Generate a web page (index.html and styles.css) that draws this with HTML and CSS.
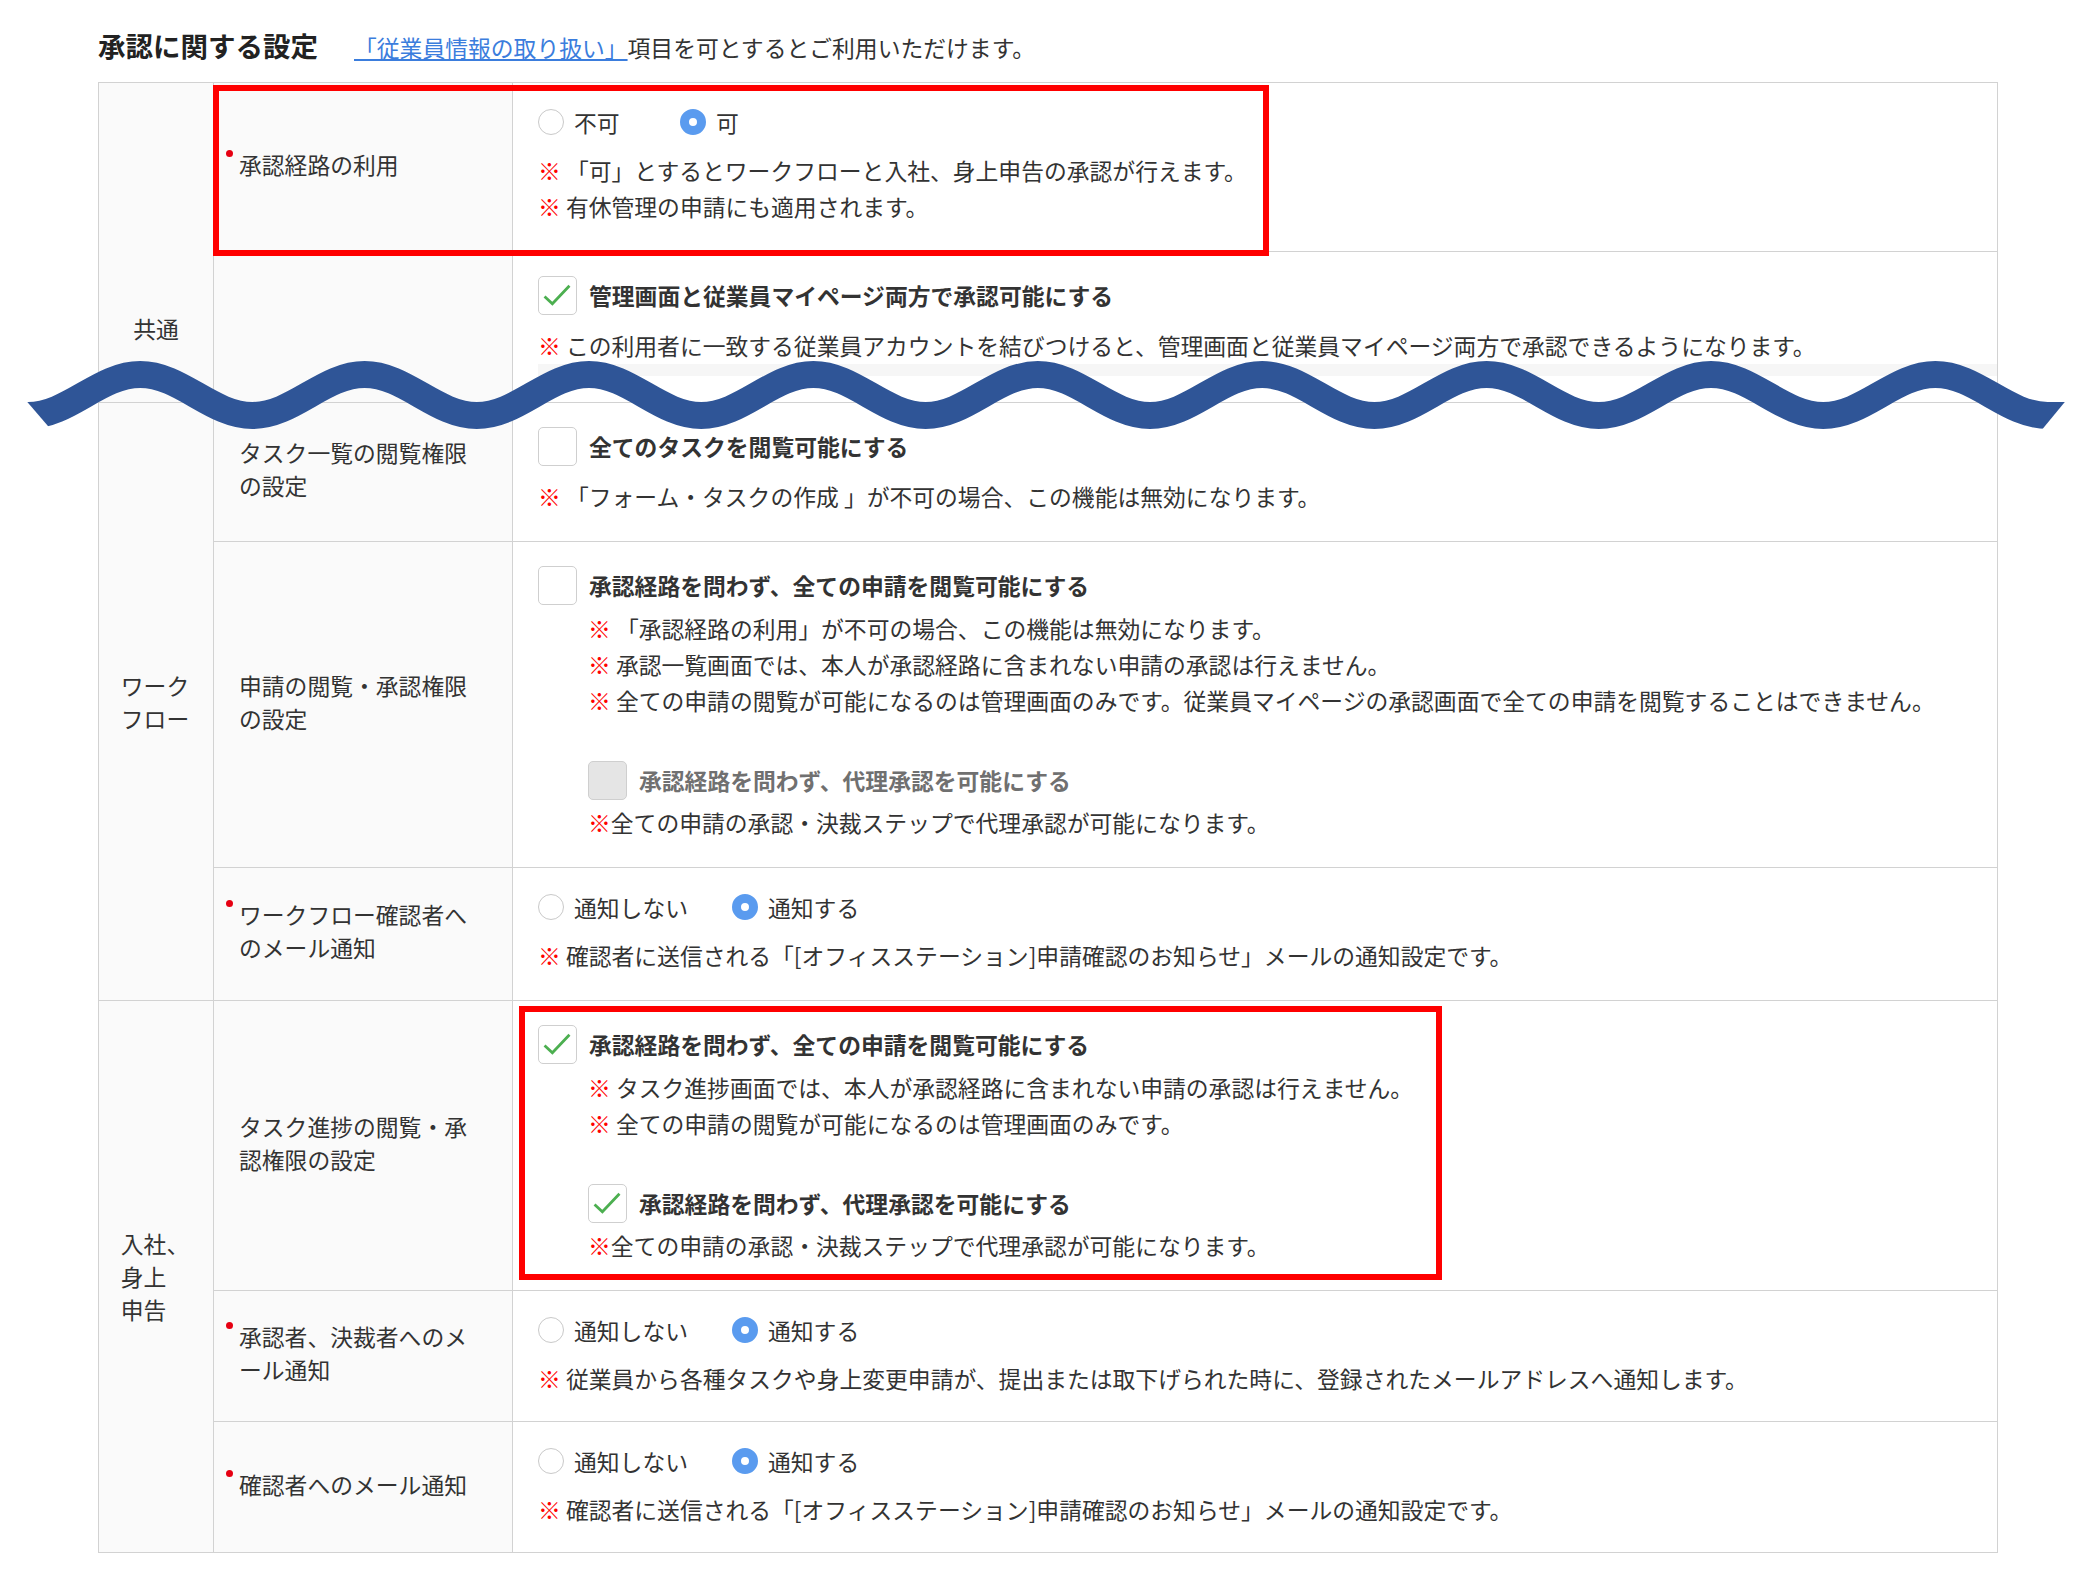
FILE: index.html
```html
<!DOCTYPE html>
<html lang="ja">
<head>
  <meta charset="UTF-8">
  <title>承認に関する設定</title>
  <link rel="stylesheet" href="styles.css">
</head>
<body>

<div class="page">

  <!-- heading -->
  <div class="heading">
    <h2>承認に関する設定</h2>
    <a href="#" class="heading-link">「従業員情報の取り扱い」</a>
    <span>項目を可とするとご利用いただけます。</span>
  </div>

  <div class="table-wrap">
    <table class="settings">
      <colgroup>
        <col class="col-cat">
        <col class="col-label">
        <col>
      </colgroup>

      <!-- 共通 -->
      <tr>
        <th class="cat cat-common" rowspan="2">共通</th>
        <th class="label"><span class="label-text required">承認経路の利用</span></th>
        <td class="body">
          <div class="choices">
            <label class="choice"><span class="radio"></span><span class="choice-text">不可</span></label>
            <label class="choice"><span class="radio on"></span><span class="choice-text">可</span></label>
          </div>
          <p class="note"><span class="mark">※</span> 「可」とするとワークフローと入社、身上申告の承認が行えます。</p>
          <p class="note"><span class="mark">※</span> 有休管理の申請にも適用されます。</p>
        </td>
      </tr>
      <tr>
        <th class="label"></th>
        <td class="body">
          <div class="check">
            <span class="box checked"><svg viewBox="0 0 39 39"><path d="M6 21 L14.5 29 L33 9.5"/></svg></span>
            <span>管理画面と従業員マイページ両方で承認可能にする</span>
          </div>
          <p class="note"><span class="mark">※</span> この利用者に一致する従業員アカウントを結びつけると、管理画面と従業員マイページ両方で承認できるようになります。</p>
          <div class="cut-panel"></div>
        </td>
      </tr>

      <!-- ワークフロー -->
      <tr>
        <th class="cat" rowspan="3"><span class="cat-text">ワーク<br>フロー</span></th>
        <th class="label"><span class="label-text">タスク一覧の閲覧権限の設定</span></th>
        <td class="body">
          <div class="check">
            <span class="box"></span>
            <span>全てのタスクを閲覧可能にする</span>
          </div>
          <p class="note"><span class="mark">※</span> 「フォーム・タスクの作成 」が不可の場合、この機能は無効になります。</p>
        </td>
      </tr>
      <tr>
        <th class="label"><span class="label-text">申請の閲覧・承認権限の設定</span></th>
        <td class="body">
          <div class="check check-tight">
            <span class="box"></span>
            <span>承認経路を問わず、全ての申請を閲覧可能にする</span>
          </div>
          <div class="indent">
            <p class="note"><span class="mark">※</span> 「承認経路の利用」が不可の場合、この機能は無効になります。</p>
            <p class="note"><span class="mark">※</span> 承認一覧画面では、本人が承認経路に含まれない申請の承認は行えません。</p>
            <p class="note"><span class="mark">※</span> 全ての申請の閲覧が可能になるのは管理画面のみです。従業員マイページの承認画面で全ての申請を閲覧することはできません。</p>
            <div class="check check-sub disabled">
              <span class="box"></span>
              <span>承認経路を問わず、代理承認を可能にする</span>
            </div>
            <p class="note"><span class="mark">※</span>全ての申請の承認・決裁ステップで代理承認が可能になります。</p>
          </div>
        </td>
      </tr>
      <tr>
        <th class="label"><span class="label-text required">ワークフロー確認者へのメール通知</span></th>
        <td class="body">
          <div class="choices">
            <label class="choice"><span class="radio"></span><span class="choice-text">通知しない</span></label>
            <label class="choice"><span class="radio on"></span><span class="choice-text">通知する</span></label>
          </div>
          <p class="note"><span class="mark">※</span> 確認者に送信される「[オフィスステーション]申請確認のお知らせ」メールの通知設定です。</p>
        </td>
      </tr>

      <!-- 入社、身上申告 -->
      <tr>
        <th class="cat" rowspan="3"><span class="cat-text">入社、<br>身上<br>申告</span></th>
        <th class="label"><span class="label-text">タスク進捗の閲覧・承認権限の設定</span></th>
        <td class="body">
          <div class="check check-tight">
            <span class="box checked"><svg viewBox="0 0 39 39"><path d="M6 21 L14.5 29 L33 9.5"/></svg></span>
            <span>承認経路を問わず、全ての申請を閲覧可能にする</span>
          </div>
          <div class="indent">
            <p class="note"><span class="mark">※</span> タスク進捗画面では、本人が承認経路に含まれない申請の承認は行えません。</p>
            <p class="note"><span class="mark">※</span> 全ての申請の閲覧が可能になるのは管理画面のみです。</p>
            <div class="check check-sub">
              <span class="box checked"><svg viewBox="0 0 39 39"><path d="M6 21 L14.5 29 L33 9.5"/></svg></span>
              <span>承認経路を問わず、代理承認を可能にする</span>
            </div>
            <p class="note"><span class="mark">※</span>全ての申請の承認・決裁ステップで代理承認が可能になります。</p>
          </div>
        </td>
      </tr>
      <tr>
        <th class="label"><span class="label-text required">承認者、決裁者へのメール通知</span></th>
        <td class="body body-short">
          <div class="choices">
            <label class="choice"><span class="radio"></span><span class="choice-text">通知しない</span></label>
            <label class="choice"><span class="radio on"></span><span class="choice-text">通知する</span></label>
          </div>
          <p class="note"><span class="mark">※</span> 従業員から各種タスクや身上変更申請が、提出または取下げられた時に、登録されたメールアドレスへ通知します。</p>
        </td>
      </tr>
      <tr>
        <th class="label"><span class="label-text required">確認者へのメール通知</span></th>
        <td class="body body-short">
          <div class="choices">
            <label class="choice"><span class="radio"></span><span class="choice-text">通知しない</span></label>
            <label class="choice"><span class="radio on"></span><span class="choice-text">通知する</span></label>
          </div>
          <p class="note"><span class="mark">※</span> 確認者に送信される「[オフィスステーション]申請確認のお知らせ」メールの通知設定です。</p>
        </td>
      </tr>
    </table>

    <!-- red annotation frames -->
    <div class="frame frame-top"></div>
    <div class="frame frame-bottom"></div>
  </div>

  <!-- cut mark between the two parts of the screenshot -->
  <svg class="wave" viewBox="0 0 2078 110" width="2078" height="110">
    <defs>
      <clipPath id="waveCut">
        <polygon points="-26,0 2116,0 2025.3,110 68.6,110"/>
      </clipPath>
    </defs>
    <path clip-path="url(#waveCut)"
          d="M0 75.5 L28 75.5 C68.8 75.5 99.4 34.5 140.2 34.5
             S211.6 75.5 252.4 75.5 S323.8 34.5 364.6 34.5
             S436 75.5 476.8 75.5 S548.2 34.5 589 34.5
             S660.4 75.5 701.2 75.5 S772.6 34.5 813.4 34.5
             S884.8 75.5 925.6 75.5 S997 34.5 1037.8 34.5
             S1109.2 75.5 1150 75.5 S1221.4 34.5 1262.2 34.5
             S1333.6 75.5 1374.4 75.5 S1445.8 34.5 1486.6 34.5
             S1558 75.5 1598.8 75.5 S1670.2 34.5 1711 34.5
             S1782.4 75.5 1823.2 75.5 S1894.6 34.5 1935.4 34.5
             S2006.8 75.5 2047.6 75.5 L2078 75.5"/>
  </svg>

</div>

</body>
</html>
```

FILE: styles.css
```css
body {
  margin: 0;
  font-family: "Noto Sans CJK JP", "Noto Sans", sans-serif;
  font-size: 22.8px;
  color: #333;
  background-color: #fff;
}

.page {
  position: relative;
  padding: 26px 0 40px 98px;
}

/* heading */
.heading {
  display: flex;
  align-items: baseline;
  height: 38px;
  margin-bottom: 18px;
}

.heading h2 {
  margin: 0 36px 0 0;
  font-size: 27.5px;
  line-height: 38px;
  font-weight: 700;
  color: #222;
}

.heading-link {
  color: #3b7ddd;
  text-decoration: underline;
}

/* table */
.table-wrap {
  position: relative;
  width: 1900px;
}

.settings {
  width: 1900px;
  border-collapse: collapse;
  table-layout: fixed;
}

.col-cat {
  width: 115px;
}

.col-label {
  width: 299px;
}

.settings th,
.settings td {
  border: 1px solid #d2d2d2;
}

.cat {
  background-color: #fafafa;
  font-weight: normal;
  text-align: center;
  vertical-align: middle;
  line-height: 33px;
  padding: 0 2px 0 0;
}

.cat-text {
  display: inline-block;
  text-align: left;
}

.cat-common {
  vertical-align: bottom;
  padding: 0 0 57px 0;
}

.label {
  background-color: #fafafa;
  font-weight: normal;
  text-align: left;
  vertical-align: middle;
  line-height: 33px;
  padding: 0 37px 6px 25px;
  line-break: loose;
}

.label-text {
  position: relative;
}

.required::before {
  content: "";
  position: absolute;
  left: -13px;
  top: 2px;
  width: 7px;
  height: 7px;
  border-radius: 50%;
  background-color: #e60012;
}

.body {
  vertical-align: top;
  padding: 24px 25px 26px;
  background-color: #fff;
}

.body-short {
  padding-bottom: 24px;
}

/* radios */
.choices {
  display: flex;
  align-items: center;
  height: 30px;
  margin-bottom: 16px;
}

.choice {
  display: flex;
  align-items: center;
  margin-right: 44px;
}

.choice-text {
  min-width: 62px;
}

.radio {
  width: 26px;
  height: 26px;
  box-sizing: border-box;
  border: 1.5px solid #c9c9c9;
  border-radius: 50%;
  background-color: #fff;
  margin-right: 10px;
}

.radio.on {
  border: 9px solid #5a9bef;
  background-color: #fff;
}

/* checkboxes */
.check {
  display: flex;
  align-items: center;
  height: 39px;
  font-weight: 700;
  margin-bottom: 13px;
}

.check-tight {
  margin-bottom: 6px;
}

.check-sub {
  margin-top: 42px;
  margin-bottom: 5px;
}

.box {
  width: 39px;
  height: 39px;
  box-sizing: border-box;
  border: 1.5px solid #cfcfcf;
  border-radius: 5px;
  background-color: #fff;
  margin-right: 12px;
  flex: none;
}

.box svg {
  display: block;
  width: 36px;
  height: 36px;
}

.box path {
  fill: none;
  stroke: #4caf50;
  stroke-width: 3;
}

.disabled {
  color: #707070;
}

.disabled .box {
  background-color: #e5e5e5;
  border-color: #cfcfcf;
}

.indent {
  padding-left: 50px;
}

/* notes */
.note {
  margin: 0;
  line-height: 36px;
}

.mark {
  color: #ff0000;
  font-weight: 700;
}

.cut-panel {
  height: 12px;
  margin-right: -25px;
  background-color: #f6f6f6;
}

/* annotations */
.frame {
  position: absolute;
  box-sizing: border-box;
  border: 6px solid #ff0000;
}

.frame-top {
  left: 115px;
  top: 3px;
  width: 1056px;
  height: 171px;
}

.frame-bottom {
  left: 421px;
  top: 924px;
  width: 923px;
  height: 274px;
}

.wave {
  position: absolute;
  left: 0;
  top: 340px;
}

.wave path {
  fill: none;
  stroke: #2f5597;
  stroke-width: 27;
}
```
